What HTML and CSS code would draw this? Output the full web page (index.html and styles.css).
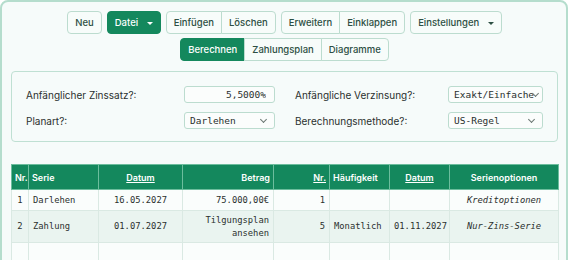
FILE: index.html
```html
<!DOCTYPE html>
<html lang="de">
<head>
    <meta charset="UTF-8">
    <title>Kreditrechner</title>
    <link rel="stylesheet" href="styles.css">
</head>
<body>
<div class="panel">

<div class="toolbar">
    <button class="btn">Neu</button>
    <button class="btn btn-primary">Datei <span class="caret"></span></button>
    <div class="btn-group">
        <button class="btn">Einfügen</button>
        <button class="btn">Löschen</button>
    </div>
    <div class="btn-group">
        <button class="btn">Erweitern</button>
        <button class="btn">Einklappen</button>
    </div>
    <button class="btn">Einstellungen <span class="caret"></span></button>
</div>

<div class="toolbar tabs">
    <div class="btn-group">
        <button class="btn btn-primary">Berechnen</button>
        <button class="btn">Zahlungsplan</button>
        <button class="btn">Diagramme</button>
    </div>
</div>

<div class="settings">
    <label>Anfänglicher Zinssatz?:</label>
    <input type="text" class="field field-rate" value="5,5000%">
    <label class="second">Anfängliche Verzinsung?:</label>
    <div class="select select-tight">
        <select class="field">
            <option>Exakt/Einfache</option>
        </select>
    </div>
    <label>Planart?:</label>
    <div class="select">
        <select class="field">
            <option>Darlehen</option>
        </select>
    </div>
    <label class="second">Berechnungsmethode?:</label>
    <div class="select">
        <select class="field">
            <option>US-Regel</option>
        </select>
    </div>
</div>

<table class="series">
    <colgroup>
        <col style="width:17px">
        <col style="width:70px">
        <col style="width:84px">
        <col style="width:91px">
        <col style="width:56px">
        <col style="width:60px">
        <col style="width:60px">
        <col style="width:109px">
    </colgroup>
    <thead>
        <tr>
            <th>Nr.</th>
            <th>Serie</th>
            <th class="c"><u>Datum</u></th>
            <th class="r">Betrag</th>
            <th class="r"><u>Nr.</u></th>
            <th>Häufigkeit</th>
            <th class="c"><u>Datum</u></th>
            <th class="c">Serienoptionen</th>
        </tr>
    </thead>
    <tbody>
        <tr>
            <td class="c">1</td>
            <td>Darlehen</td>
            <td class="c">16.05.2027</td>
            <td class="r">75.000,00€</td>
            <td class="r">1</td>
            <td></td>
            <td></td>
            <td class="c opt">Kreditoptionen</td>
        </tr>
        <tr>
            <td class="c">2</td>
            <td>Zahlung</td>
            <td class="c">01.07.2027</td>
            <td class="r">Tilgungsplan ansehen</td>
            <td class="r">5</td>
            <td>Monatlich</td>
            <td class="c">01.11.2027</td>
            <td class="c opt">Nur-Zins-Serie</td>
        </tr>
        <tr class="empty">
            <td></td><td></td><td></td><td></td><td></td><td></td><td></td><td></td>
        </tr>
    </tbody>
</table>

</div>
</body>
</html>
```

FILE: styles.css
```css
body {
    margin: 0;
    background: #ffffff;
    font-family: Inter, "Noto Sans", sans-serif;
    color: #2b3a34;
}

.panel {
    margin-right: 2px;
    min-height: 300px;
    border: 2px solid #b5ddcd;
    border-radius: 8px;
    background: #f6fbfa;
    padding: 9px 8px 0 9px;
}

.toolbar {
    display: flex;
    justify-content: center;
    gap: 5px;
}

.toolbar.tabs {
    margin-top: 4px;
}

.btn {
    height: 23px;
    padding: 0 7px;
    font-family: Inter, sans-serif;
    font-size: 9.5px;
    font-weight: 500;
    color: #2d4f43;
    background: #f7fcfa;
    border: 1px solid #bcdccf;
    border-radius: 4px;
}

.btn-primary {
    background: #14885d;
    border-color: #14885d;
    color: #ffffff;
}

.caret {
    display: inline-block;
    margin-left: 6px;
    vertical-align: middle;
    border-left: 3px solid transparent;
    border-right: 3px solid transparent;
    border-top: 3px solid currentColor;
}

.btn-group {
    display: flex;
}

.btn-group .btn {
    border-radius: 0;
    margin-left: -1px;
}

.btn-group .btn:first-child {
    border-radius: 4px 0 0 4px;
    margin-left: 0;
}

.btn-group .btn:last-child {
    border-radius: 0 4px 4px 0;
}

.settings {
    margin-top: 10px;
    display: grid;
    grid-template-columns: 158px 91px 1fr 95px;
    row-gap: 9px;
    align-items: center;
    padding: 14px 14px 12px 14px;
    border: 1px solid #bfe0d3;
    border-radius: 4px;
    font-size: 10px;
    color: #2a302e;
}

.settings .second {
    padding-left: 20px;
}

.field {
    width: 100%;
    height: 17px;
    box-sizing: border-box;
    border: 1px solid #bcdccf;
    border-radius: 3px;
    background: #fbfdfc;
    font-family: "DejaVu Sans Mono", monospace;
    font-size: 9.5px;
    color: #2a302e;
    padding: 0 5px;
}

.field-rate {
    text-align: right;
    padding-right: 8px;
}

.select {
    position: relative;
}

.select select {
    appearance: none;
    -webkit-appearance: none;
    padding-right: 14px;
}

.select::after {
    content: "";
    position: absolute;
    right: 9px;
    top: 5px;
    width: 4px;
    height: 4px;
    border-right: 1px solid #6b7773;
    border-bottom: 1px solid #6b7773;
    transform: rotate(45deg);
}

.select-tight select {
    padding-right: 0;
}

.select-tight::after {
    right: 5px;
}

.series {
    margin-top: 22px;
    width: 547px;
    table-layout: fixed;
    border-collapse: collapse;
    font-family: "DejaVu Sans Mono", monospace;
    font-size: 8.8px;
    color: #2a302e;
}

.series th {
    height: 24px;
    padding: 0 3px;
    background: #14885d;
    color: #ffffff;
    font-family: Inter, sans-serif;
    font-size: 9px;
    font-weight: 600;
    text-align: left;
    border: 1px solid #6cbd9d;
}

.series td {
    height: 20px;
    padding: 0 4px;
    line-height: 13px;
    border: 1px solid #dae9e3;
    background: #fafdfc;
}

.series tbody tr:nth-child(2) td {
    height: 31px;
    background: #eaf4f0;
}

.series tr.empty td {
    height: 24px;
}

.series .c {
    text-align: center;
}

.series .r {
    text-align: right;
}

.series .opt {
    font-style: italic;
}
```
